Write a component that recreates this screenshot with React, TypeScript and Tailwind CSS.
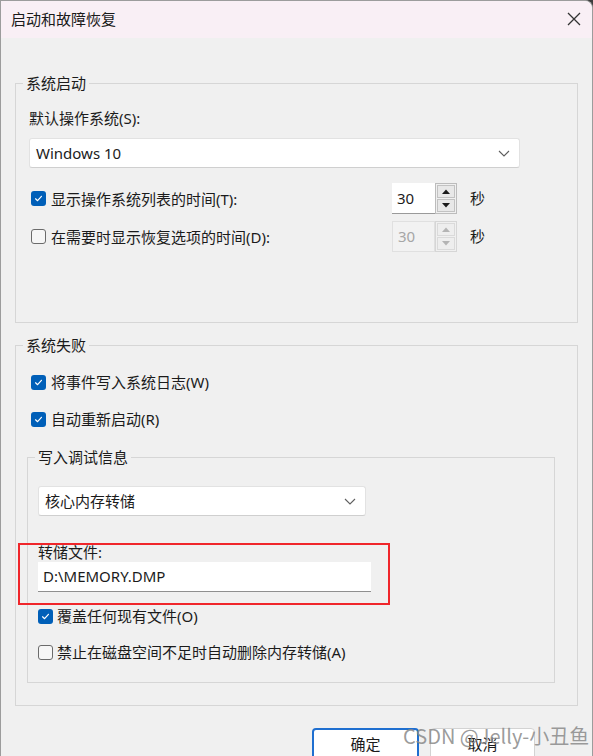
import React from "react"

const Check = ({ checked }: { checked: boolean }) => {
  if (!checked) {
    return <div className="w-[15px] h-[15px] shrink-0 rounded-[3px] border border-[#6b6b6b] bg-[#f6f6f6]" />
  }
  return (
    <div className="w-[15px] h-[15px] shrink-0 rounded-[3px] bg-[#005fb8] flex items-center justify-center">
      <svg width="11" height="11" viewBox="0 0 12 12">
        <path d="M2.8 6.3 L5 8.4 L9.2 3.6" fill="none" stroke="#ffffff" strokeWidth="1.3" strokeLinecap="round" strokeLinejoin="round" />
      </svg>
    </div>
  )
}

const Chevron = () => (
  <svg width="12" height="7" viewBox="0 0 12 7">
    <polyline points="1,1 6,6 11,1" fill="none" stroke="#5f5f5f" strokeWidth="1.1" />
  </svg>
)

const Select = ({ value, width }: { value: string; width: string }) => (
  <div
    className={`${width} h-[30px] bg-white border border-[#e2e2e2] border-b-[#cfcfcf] rounded-[3px] flex items-center justify-between pl-[6px] pr-[9px] text-[15px] text-[#1b1b1b]`}
  >
    <span>{value}</span>
    <Chevron />
  </div>
)

const Spinner = ({ disabled }: { disabled?: boolean }) => {
  const arrow = disabled ? "#b4b4b4" : "#1b1b1b"
  return (
    <div className="flex h-[31px]">
      <div
        className={`w-[43px] h-full flex items-center pl-[5px] text-[15px] ${
          disabled ? "bg-[#f2f2f2] text-[#a6a6a6] border border-[#e0e0e0]" : "bg-white text-[#1b1b1b] border-b border-[#9a9a9a]"
        }`}
      >
        30
      </div>
      <div className={`w-[22px] h-full border flex flex-col p-[1px] gap-[1px] ${disabled ? "border-[#d6d6d6]" : "border-[#bcbcbc]"}`}>
        <div className={`flex-1 border flex items-center justify-center ${disabled ? "bg-[#eeeeee] border-[#dadada]" : "bg-[#e8e8e8] border-[#c2c2c2]"}`}>
          <svg width="8" height="5" viewBox="0 0 8 5">
            <polygon points="0,5 4,0.5 8,5" fill={arrow} />
          </svg>
        </div>
        <div className={`flex-1 border flex items-center justify-center ${disabled ? "bg-[#eeeeee] border-[#dadada]" : "bg-[#e8e8e8] border-[#c2c2c2]"}`}>
          <svg width="8" height="5" viewBox="0 0 8 5">
            <polygon points="0,0 8,0 4,4.5" fill={arrow} />
          </svg>
        </div>
      </div>
    </div>
  )
}

const Row = ({ checked, label, className = "" }: { checked: boolean; label: string; className?: string }) => (
  <div className={`flex items-center h-[20px] ${className}`}>
    <Check checked={checked} />
    <span className="ml-[5px] text-[15px] leading-[20px] text-[#1b1b1b]">{label}</span>
  </div>
)

export default function App() {
  return (
    <div className="w-[593px] h-[756px] bg-[#3d3d3d] overflow-hidden font-['Noto_Sans','Noto_Sans_CJK_SC',sans-serif]">
      <div className="relative h-full bg-[#f0f0f0] border-l border-t border-r border-[#9c9c9c] rounded-tr-[8px] overflow-hidden">
        {/* title bar */}
        <div className="h-[37px] bg-[#f9eff5] flex items-center justify-between pl-[10px] pr-[11px]">
          <span className="text-[15px] leading-[20px] text-[#1a1a1a] -mt-[2px]">启动和故障恢复</span>
          <svg width="14" height="14" viewBox="0 0 14 14" className="-mt-[1px]">
            <path d="M1 1 L13 13 M13 1 L1 13" stroke="#333333" strokeWidth="1.3" />
          </svg>
        </div>

        {/* 系统启动 */}
        <fieldset className="mt-[35px] ml-[14px] w-[563px] border border-[#d6d6d6] min-w-0">
          <legend className="ml-[7px] px-[3px] text-[15px] leading-[20px] text-[#1b1b1b]">系统启动</legend>
          <div className="pl-[13px] pt-[15px] pb-[70px]">
            <div className="text-[15px] leading-[20px] text-[#1b1b1b]">默认操作系统(S):</div>
            <div className="mt-[10px]">
              <Select value="Windows 10" width="w-[491px]" />
            </div>
            <div className="mt-[15px] flex items-center">
              <div className="w-[363px] pl-[2px]">
                <Row checked label="显示操作系统列表的时间(T):" />
              </div>
              <Spinner />
              <span className="ml-[13px] text-[15px] text-[#1b1b1b]">秒</span>
            </div>
            <div className="mt-[7px] flex items-center">
              <div className="w-[363px] pl-[2px]">
                <Row checked={false} label="在需要时显示恢复选项的时间(D):" />
              </div>
              <Spinner disabled />
              <span className="ml-[13px] text-[15px] text-[#1b1b1b]">秒</span>
            </div>
          </div>
        </fieldset>

        {/* 系统失败 */}
        <fieldset className="mt-[12px] ml-[14px] w-[563px] border border-[#d6d6d6] min-w-0">
          <legend className="ml-[7px] px-[3px] text-[15px] leading-[20px] text-[#1b1b1b]">系统失败</legend>
          <div className="pb-[22px]">
            <Row checked label="将事件写入系统日志(W)" className="mt-[17px] pl-[15px]" />
            <Row checked label="自动重新启动(R)" className="mt-[17px] pl-[15px]" />

            <fieldset className="mt-[18px] ml-[11px] w-[528px] border border-[#d6d6d6] min-w-0">
              <legend className="ml-[7px] px-[3px] text-[15px] leading-[20px] text-[#1b1b1b]">写入调试信息</legend>
              <div className="pl-[10px] pb-[20px]">
                <div className="mt-[19px]">
                  <Select value="核心内存转储" width="w-[328px]" />
                </div>
                <div className="relative mt-[26px]">
                  <div className="text-[15px] leading-[20px] text-[#1b1b1b]">转储文件:</div>
                  <div className="w-[333px] h-[30px] bg-white border-b border-[#8f8f8f] flex items-center pl-[5px] text-[15px] text-[#1b1b1b]">
                    D:\MEMORY.DMP
                  </div>
                  <div className="absolute left-[-20px] top-[1px] w-[372px] h-[62px] border-2 border-[#f0262b]" />
                </div>
                <div className="mt-[14px] flex items-center h-[20px]">
                  <Check checked />
                  <span className="ml-[4px] text-[15px] leading-[20px] text-[#1b1b1b]">覆盖任何现有文件(O)</span>
                </div>
                <div className="mt-[16px] flex items-center h-[20px]">
                  <Check checked={false} />
                  <span className="ml-[4px] text-[15px] leading-[20px] text-[#1b1b1b]">禁止在磁盘空间不足时自动删除内存转储(A)</span>
                </div>
              </div>
            </fieldset>
          </div>
        </fieldset>

        {/* buttons */}
        <div className="mt-[22px] flex justify-end gap-[11px] pr-[57px]">
          <div className="w-[107px] h-[32px] bg-white border-2 border-[#1f6fd0] rounded-[4px] flex items-center justify-center text-[15px] text-[#1b1b1b]">
            确定
          </div>
          <div className="w-[105px] h-[32px] bg-white border border-[#d3d3d3] rounded-[4px] flex items-center justify-center text-[15px] text-[#1b1b1b]">
            取消
          </div>
        </div>

        <div className="absolute left-[402px] top-[723px] text-[20px] leading-[24px] text-[#8a8a8a]/85 font-['Noto_Sans_CJK_SC',sans-serif]">
          CSDN @Jelly-小丑鱼
        </div>
      </div>
    </div>
  )
}
